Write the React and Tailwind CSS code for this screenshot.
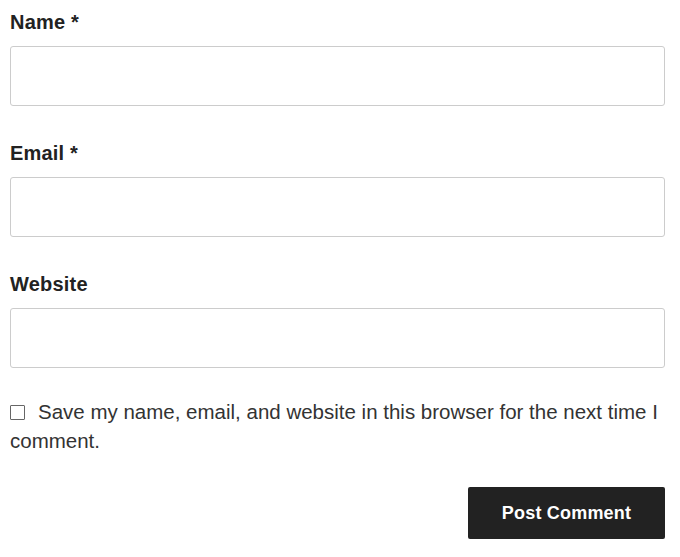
import React from "react";

const Field = ({ label, required, first }) => (
  <div className={first ? "" : "mt-[32px]"}>
    <label className="block text-[20px] leading-[30px] font-bold tracking-[0.2px] text-[#222]">
      {label}
      {required && " *"}
    </label>
    <input
      type="text"
      className="mt-[9px] block w-full h-[60px] rounded-[3px] border border-[#ccc] bg-white px-3 outline-none"
    />
  </div>
);

export default function App() {
  return (
    <div
      className="bg-white pt-[7px] pl-[10px] pr-[15px] text-[#222]"
      style={{ fontFamily: '"Liberation Sans", Arial, sans-serif' }}
    >
      <form>
        <Field label="Name" required first />
        <Field label="Email" required />
        <Field label="Website" />

        <p className="mt-[29px] text-[20.5px] leading-[29px] text-[#333]">
          <input
            type="checkbox"
            className="mr-[13px] inline-block h-[15px] w-[15px] appearance-none border border-[#666] rounded-[1px] align-[-1px]"
          />
          Save my name, email, and website in this browser for the next time I comment.
        </p>

        <div className="mt-[32px] flex justify-end">
          <button
            type="button"
            className="h-[52px] w-[197px] rounded-[2px] bg-[#222] text-[18px] font-bold tracking-[0.2px] text-white"
          >
            Post Comment
          </button>
        </div>
      </form>
    </div>
  );
}
